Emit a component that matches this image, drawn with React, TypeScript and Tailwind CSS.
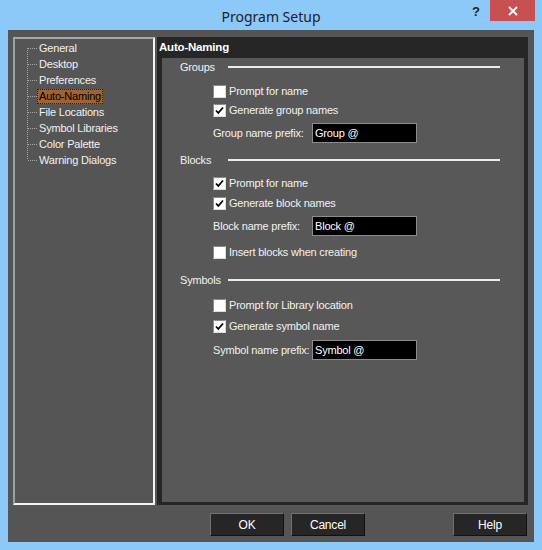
import React from 'react'

const TREE = [
  'General',
  'Desktop',
  'Preferences',
  'Auto-Naming',
  'File Locations',
  'Symbol Libraries',
  'Color Palette',
  'Warning Dialogs',
]

function TreeLink({ first, last }: { first: boolean; last: boolean }) {
  return (
    <svg width="22" height="16" className="shrink-0">
      <line
        x1="12.5"
        y1={first ? 8 : 0}
        x2="12.5"
        y2={last ? 8 : 16}
        stroke="#a8a8a8"
        strokeDasharray="1 1"
      />
      <line x1="13" y1="8.5" x2="22" y2="8.5" stroke="#a8a8a8" strokeDasharray="1 1" />
    </svg>
  )
}

function Check({ checked }: { checked: boolean }) {
  return (
    <div className="w-[13px] h-[13px] shrink-0 bg-white border border-t-[#8a8a8a] border-l-[#8a8a8a] border-b-[#dcdcdc] border-r-[#dcdcdc] flex items-center justify-center">
      {checked && (
        <svg width="9" height="9" viewBox="0 0 9 9">
          <path d="M1 4.5 L3.3 7 L8 1.5" fill="none" stroke="#000" strokeWidth="1.8" />
        </svg>
      )}
    </div>
  )
}

function Heading({ label, mt }: { label: string; mt: string }) {
  return (
    <div className={`flex items-center h-[18px] pl-[18px] pr-[24px] ${mt}`}>
      <span className="w-[48px] shrink-0">{label}</span>
      <div className="flex-1 h-[2px] bg-[#ececec]" />
    </div>
  )
}

function CheckRow({ label, checked, mt }: { label: string; checked: boolean; mt: string }) {
  return (
    <div className={`flex items-center h-[18px] pl-[51px] gap-[3px] ${mt}`}>
      <Check checked={checked} />
      <span className="whitespace-nowrap">{label}</span>
    </div>
  )
}

function PrefixRow({ label, value, mt }: { label: string; value: string; mt: string }) {
  return (
    <div className={`flex items-center h-[18px] pl-[51px] ${mt}`}>
      <span className="w-[99px] shrink-0 whitespace-nowrap">{label}</span>
      <div className="w-[105px] h-[20px] shrink-0 bg-black border border-[#8c8c8c] pl-[2px] leading-[18px] text-white">
        {value}
      </div>
    </div>
  )
}

function Button({ label, className = '' }: { label: string; className?: string }) {
  return (
    <div
      className={`w-[74px] h-[23px] bg-[#262626] border border-t-[#707070] border-l-[#707070] border-b-[#111] border-r-[#111] flex items-center justify-center text-[12px] text-white ${className}`}
    >
      {label}
    </div>
  )
}

export default function App() {
  return (
    <div
      className="w-[542px] h-[550px] bg-[#8cc8f8] flex flex-col overflow-hidden"
      style={{ fontFamily: '"Liberation Sans", Arial, sans-serif' }}
    >
      {/* Title bar */}
      <div className="h-[30px] shrink-0 flex items-start relative">
        <div
          className="flex-1 text-center text-[14px] text-[#1c1c2c] pt-[6px]"
          style={{ fontFamily: '"Noto Sans", "Open Sans", sans-serif' }}
        >
          Program Setup
        </div>
        <div className="absolute left-[472px] top-[2px] text-[13px] font-bold text-[#222]">?</div>
        <div className="absolute left-[490px] top-0 w-[45px] h-[21px] bg-[#c75050] flex items-center justify-center">
          <svg width="10" height="10" viewBox="0 0 10 10">
            <path d="M1 1 L9 9 M9 1 L1 9" stroke="#fff" strokeWidth="1.8" />
          </svg>
        </div>
      </div>

      {/* Client area */}
      <div className="mx-[8px] h-[512px] bg-[#555555] flex flex-col text-[11px] tracking-[-0.2px] text-[#f2f2f2]">
        <div className="flex pl-[5px] pt-[7px] gap-[2px]">
          {/* Tree */}
          <div className="w-[142px] h-[468px] border-2 border-t-[#a8a8a8] border-l-[#a0a0a0] border-b-[#f4f4f4] border-r-[#f4f4f4] bg-[#555555] pt-[1px]">
            {TREE.map((item, i) => (
              <div key={item} className="flex items-center h-[16px]">
                <TreeLink first={i === 0} last={i === TREE.length - 1} />
                {item === 'Auto-Naming' ? (
                  <span className="bg-[#a0622e] text-black border border-dotted border-[#222] px-[1px] leading-[13px]">
                    {item}
                  </span>
                ) : (
                  <span className="pl-[2px]">{item}</span>
                )}
              </div>
            ))}
          </div>

          {/* Page */}
          <div className="w-[371px] h-[468px] bg-[#262626] flex flex-col pb-[3px]">
            <div className="h-[21px] pl-[2px] pt-[2px] font-bold text-white text-[11.5px]">Auto-Naming</div>
            <div className="flex-1 ml-[5px] mr-[4px] bg-[#585858] flex flex-col">
              <Heading label="Groups" mt="mt-0" />
              <CheckRow label="Prompt for name" checked={false} mt="mt-[6px]" />
              <CheckRow label="Generate group names" checked mt="mt-[1px]" />
              <PrefixRow label="Group name prefix:" value="Group @" mt="mt-[5px]" />

              <Heading label="Blocks" mt="mt-[9px]" />
              <CheckRow label="Prompt for name" checked mt="mt-[5px]" />
              <CheckRow label="Generate block names" checked mt="mt-[2px]" />
              <PrefixRow label="Block name prefix:" value="Block @" mt="mt-[5px]" />
              <CheckRow label="Insert blocks when creating" checked={false} mt="mt-[8px]" />

              <Heading label="Symbols" mt="mt-[10px]" />
              <CheckRow label="Prompt for Library location" checked={false} mt="mt-[7px]" />
              <CheckRow label="Generate symbol name" checked mt="mt-[3px]" />
              <PrefixRow label="Symbol name prefix:" value="Symbol @" mt="mt-[6px]" />
            </div>
          </div>
        </div>

        {/* Buttons */}
        <div className="flex mt-[8px] pl-[202px] pr-[7px] gap-[7px]">
          <Button label="OK" />
          <Button label="Cancel" />
          <Button label="Help" className="ml-auto" />
        </div>
      </div>
    </div>
  )
}
